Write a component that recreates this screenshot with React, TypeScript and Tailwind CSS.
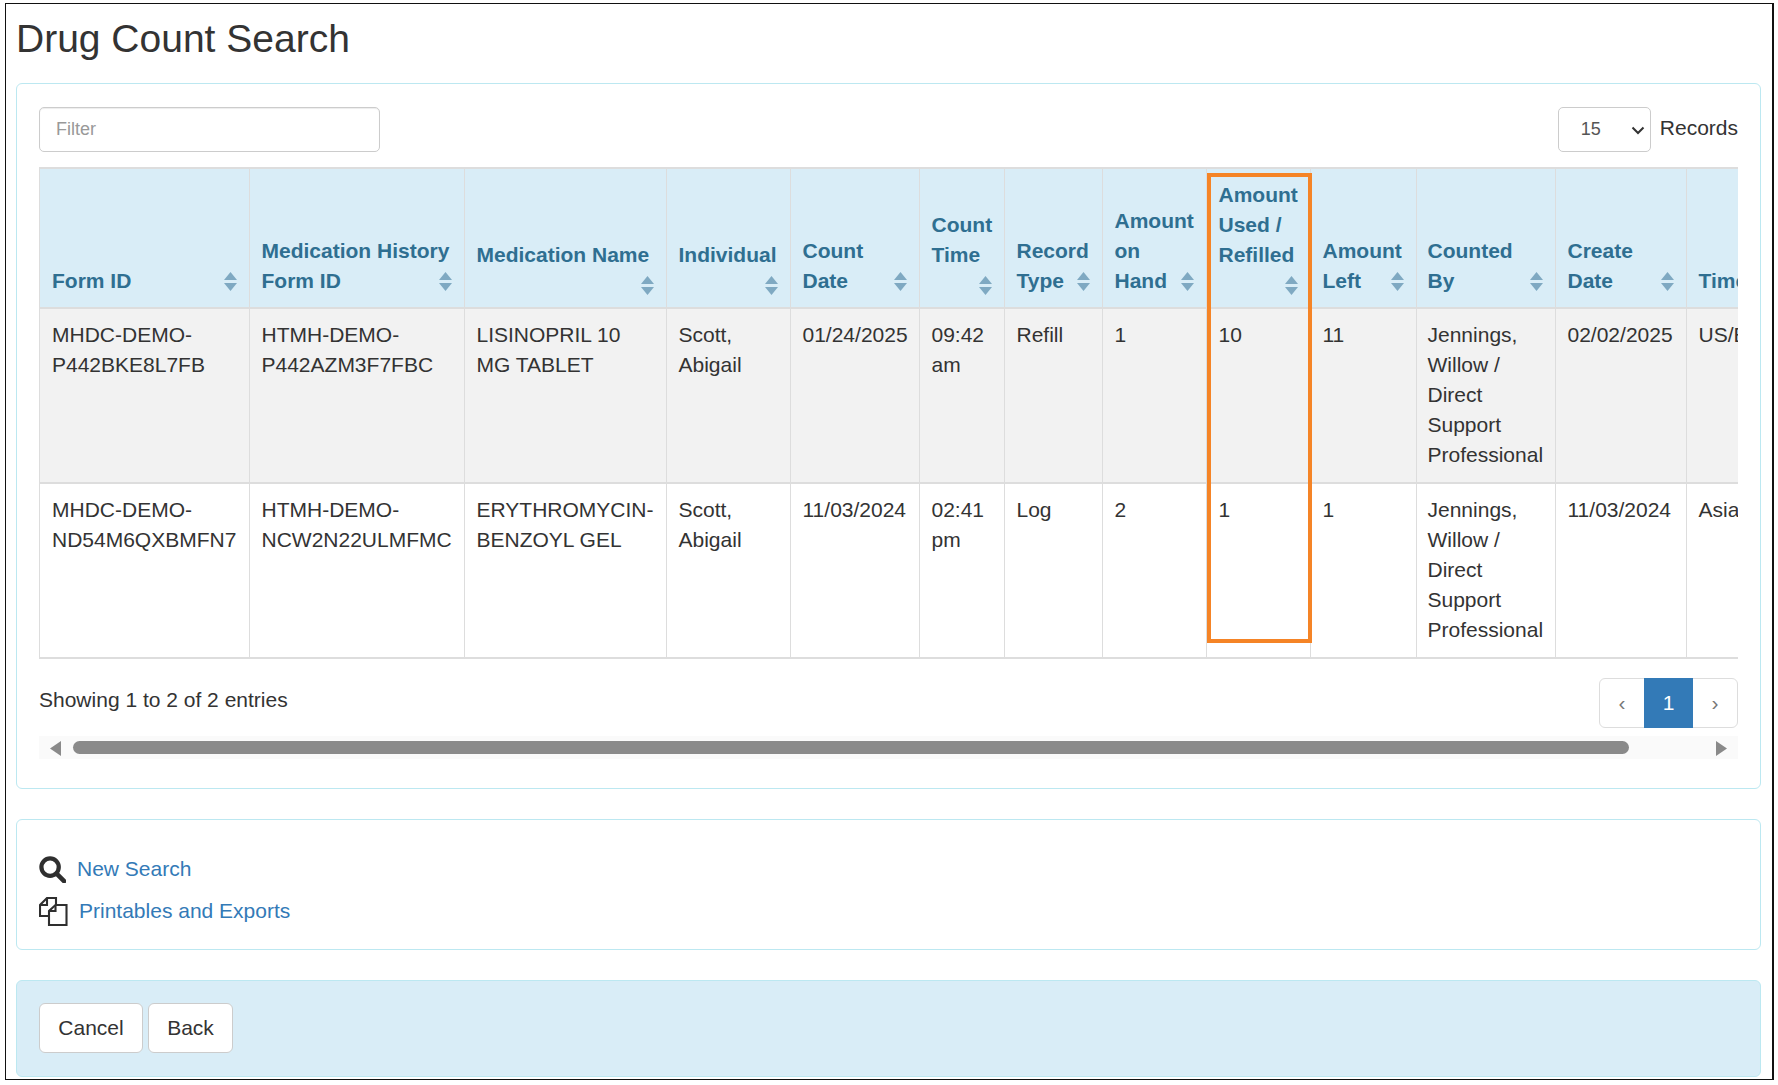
import React from "react";

const cols = [
  { w: 209, h: ["Form ID"] },
  { w: 215, h: ["Medication History", "Form ID"] },
  { w: 202, h: ["Medication Name"], below: true },
  { w: 124, h: ["Individual"], below: true },
  { w: 129, h: ["Count", "Date"] },
  { w: 85, h: ["Count", "Time"], below: true },
  { w: 98, h: ["Record", "Type"] },
  { w: 104, h: ["Amount", "on", "Hand"] },
  { w: 104, h: ["Amount", "Used /", "Refilled"], below: true },
  { w: 106, h: ["Amount", "Left"] },
  { w: 139, h: ["Counted", "By"], tight: true },
  { w: 131, h: ["Create", "Date"] },
  { w: 124, h: ["Time Zone"] },
];

const rows = [
  [
    ["MHDC-DEMO-", "P442BKE8L7FB"],
    ["HTMH-DEMO-", "P442AZM3F7FBC"],
    ["LISINOPRIL 10", "MG TABLET"],
    ["Scott,", "Abigail"],
    ["01/24/2025"],
    ["09:42", "am"],
    ["Refill"],
    ["1"],
    ["10"],
    ["11"],
    ["Jennings,", "Willow /", "Direct", "Support", "Professional"],
    ["02/02/2025"],
    ["US/Eastern"],
  ],
  [
    ["MHDC-DEMO-", "ND54M6QXBMFN7"],
    ["HTMH-DEMO-", "NCW2N22ULMFMC"],
    ["ERYTHROMYCIN-", "BENZOYL GEL"],
    ["Scott,", "Abigail"],
    ["11/03/2024"],
    ["02:41", "pm"],
    ["Log"],
    ["2"],
    ["1"],
    ["1"],
    ["Jennings,", "Willow /", "Direct", "Support", "Professional"],
    ["11/03/2024"],
    ["Asia/Kolkata"],
  ],
];

function Sort({ className }: { className?: string }) {
  return (
    <svg width="13" height="19" viewBox="0 0 13 19" className={className}>
      <path d="M6.5 0L13 8H0Z" fill="#7fa9c2" />
      <path d="M6.5 19L0 11H13Z" fill="#7fa9c2" />
    </svg>
  );
}

function Lines({ lines }: { lines: string[] }) {
  return (
    <>
      {lines.map((l, i) => (
        <div key={i} className="whitespace-nowrap">
          {l}
        </div>
      ))}
    </>
  );
}

export default function App() {
  return (
    <div className="w-[1778px] h-[1085px] bg-white overflow-hidden pl-[5px] pt-[3px] font-['Liberation_Sans',Arial,sans-serif] text-[21px] leading-[30px] text-[#333333]">
      <div className="w-[1769px] h-[1077px] border-t border-l border-r-2 border-b border-[#111111] pl-[10px] pr-[11px]">
        <h1 className="text-[39px] leading-[44px] font-normal pt-[13px] h-[79px]">Drug Count Search</h1>

        <section className="h-[706px] border border-[#bce8f1] rounded-[6px] px-[22px] pt-[23px] bg-white">
          <div className="flex items-center justify-between h-[45px]">
            <input
              placeholder="Filter"
              className="w-[341px] h-[45px] border border-[#cccccc] rounded-[5px] px-[16px] text-[18px] placeholder:text-[#999999] outline-none shadow-[inset_0_1px_1px_rgba(0,0,0,0.075)]"
            />
            <div className="flex items-center gap-[9px]">
              <div className="relative w-[93px] h-[45px] border border-[#cccccc] rounded-[5px] flex items-center pl-[22px] pb-[1px] text-[18px] text-[#555555]">
                15
                <svg width="14" height="9" viewBox="0 0 14 9" className="absolute right-[5px] top-[18px]">
                  <path d="M1.5 1.5L7 7L12.5 1.5" fill="none" stroke="#333333" strokeWidth="2" />
                </svg>
              </div>
              <span className="-mt-[4px]">Records</span>
            </div>
          </div>

          <div className="relative mt-[15px] w-[1699px] overflow-hidden border-l border-[#dddddd]">
            <table className="table-fixed border-collapse w-[1770px]">
              <colgroup>
                {cols.map((c, i) => (
                  <col key={i} style={{ width: c.w }} />
                ))}
              </colgroup>
              <thead>
                <tr className="h-[140px] bg-[#d9edf7] border-t-2 border-b-2 border-[#dddddd]">
                  {cols.map((c, i) => (
                    <th
                      key={i}
                      className={`relative align-bottom text-left font-bold text-[#2f6f91] border-l border-[#dddddd] first:border-l-0 pr-[10px] whitespace-nowrap ${c.tight ? "pl-[11px]" : "pl-[12px]"} ${c.below ? "pb-[37px]" : "pb-[11px]"}`}
                    >
                      <Lines lines={c.h} />
                      <Sort className={`absolute right-[12px] ${c.below ? "bottom-[12px]" : "bottom-[16px]"}`} />
                    </th>
                  ))}
                </tr>
              </thead>
              <tbody>
                {rows.map((r, ri) => (
                  <tr key={ri} className={`h-[175px] border-b-2 border-[#dddddd] ${ri === 0 ? "bg-[#f2f2f2]" : "bg-white"}`}>
                    {r.map((c, ci) => (
                      <td
                        key={ci}
                        className={`align-top border-l border-[#dddddd] first:border-l-0 pt-[11px] pb-[11px] overflow-hidden ${cols[ci].tight ? "pl-[11px]" : "pl-[12px]"}`}
                      >
                        <Lines lines={c} />
                      </td>
                    ))}
                  </tr>
                ))}
              </tbody>
            </table>
            <div className="absolute left-[1167px] top-[6px] w-[105px] h-[470px] border-[4px] border-[#f58426]" />
          </div>

          <div className="flex items-start justify-between w-[1699px] mt-[19px] h-[51px]">
            <span className="pt-[7px]">Showing 1 to 2 of 2 entries</span>
            <div className="flex h-[50px] border border-[#dddddd] rounded-[6px] text-[21px] text-[#777777]">
              <span className="w-[44px] flex items-center justify-center">‹</span>
              <span className="w-[49px] flex items-center justify-center bg-[#337ab7] text-white -my-px">1</span>
              <span className="w-[44px] flex items-center justify-center">›</span>
            </div>
          </div>

          <div className="relative w-[1699px] h-[23px] mt-[7px] bg-[#fafafa]">
            <svg width="12" height="15" viewBox="0 0 12 15" className="absolute left-[11px] top-[5px]">
              <path d="M11 0V15L0 7.5Z" fill="#8a8a8a" />
            </svg>
            <div className="absolute left-[34px] top-[5px] w-[1556px] h-[13px] rounded-full bg-[#8a8a8a]" />
            <svg width="12" height="15" viewBox="0 0 12 15" className="absolute right-[11px] top-[5px]">
              <path d="M1 0V15L12 7.5Z" fill="#8a8a8a" />
            </svg>
          </div>
        </section>

        <section className="h-[131px] mt-[30px] border border-[#bce8f1] rounded-[6px] px-[22px] pt-[34px] text-[#337ab7]">
          <div className="flex items-center h-[30px]">
            <svg width="27" height="27" viewBox="0 0 28 28" className="mr-[11px] shrink-0">
              <circle cx="11.5" cy="11.5" r="9" fill="none" stroke="#2f2f2f" strokeWidth="4.4" />
              <path d="M18.5 18.5L26 26" stroke="#2f2f2f" strokeWidth="4.8" strokeLinecap="round" />
            </svg>
            <span>New Search</span>
          </div>
          <div className="flex items-center h-[30px] mt-[12px]">
            <svg width="29" height="29" viewBox="0 0 29 29" className="mr-[11px] shrink-0">
              <path d="M10 19H1V8L8 1H17V8" fill="none" stroke="#2f2f2f" strokeWidth="2.1" />
              <path d="M1 8H8V1" fill="none" stroke="#2f2f2f" strokeWidth="2.1" />
              <path d="M10 28V14L16.5 8H27.5V28Z" fill="white" stroke="#2f2f2f" strokeWidth="2.1" />
              <path d="M10 14H16.5V8" fill="none" stroke="#2f2f2f" strokeWidth="2.1" />
            </svg>
            <span>Printables and Exports</span>
          </div>
        </section>

        <section className="h-[97px] mt-[30px] border border-[#bce8f1] rounded-[6px] bg-[#d9edf7] px-[22px] pt-[22px] flex gap-[5px] items-start">
          <button className="w-[104px] h-[50px] bg-white border border-[#cccccc] rounded-[6px]">Cancel</button>
          <button className="w-[85px] h-[50px] bg-white border border-[#cccccc] rounded-[6px]">Back</button>
        </section>
      </div>
    </div>
  );
}
